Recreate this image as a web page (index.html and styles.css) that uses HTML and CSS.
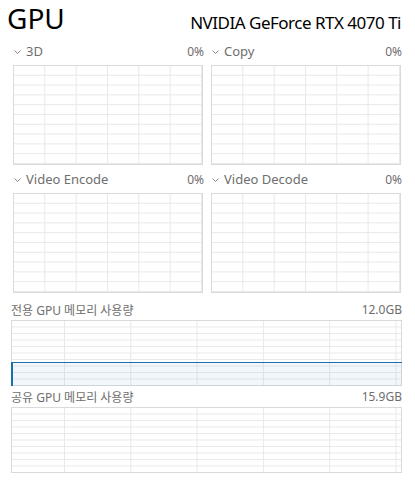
FILE: index.html
```html
<!DOCTYPE html>
<html lang="ko">

<head>
    <meta charset="UTF-8">
    <meta name="viewport" content="width=device-width, initial-scale=1.0">
    <title>GPU</title>
    <link rel="stylesheet" href="styles.css">
</head>

<body>
    <div id="header">
        <h1>GPU</h1>
        <span class="device">NVIDIA GeForce RTX 4070 Ti</span>
    </div>

    <div id="engines">
        <div class="engine">
            <div class="engine-head">
                <span class="name"><svg class="chev" width="7" height="4" viewBox="0 0 7 4"><path d="M0.5 0.5 L3.5 3.5 L6.5 0.5" fill="none" stroke="#8a8a8a" stroke-width="1"/></svg>3D</span>
                <span class="pct">0%</span>
            </div>
            <div class="graph"></div>
        </div>
        <div class="engine">
            <div class="engine-head">
                <span class="name"><svg class="chev" width="7" height="4" viewBox="0 0 7 4"><path d="M0.5 0.5 L3.5 3.5 L6.5 0.5" fill="none" stroke="#8a8a8a" stroke-width="1"/></svg>Copy</span>
                <span class="pct">0%</span>
            </div>
            <div class="graph"></div>
        </div>
        <div class="engine">
            <div class="engine-head">
                <span class="name"><svg class="chev" width="7" height="4" viewBox="0 0 7 4"><path d="M0.5 0.5 L3.5 3.5 L6.5 0.5" fill="none" stroke="#8a8a8a" stroke-width="1"/></svg>Video Encode</span>
                <span class="pct">0%</span>
            </div>
            <div class="graph"></div>
        </div>
        <div class="engine">
            <div class="engine-head">
                <span class="name"><svg class="chev" width="7" height="4" viewBox="0 0 7 4"><path d="M0.5 0.5 L3.5 3.5 L6.5 0.5" fill="none" stroke="#8a8a8a" stroke-width="1"/></svg>Video Decode</span>
                <span class="pct">0%</span>
            </div>
            <div class="graph"></div>
        </div>
    </div>

    <div class="memory first">
        <div class="mem-head">
            <span>전용 GPU 메모리 사용량</span>
            <span>12.0GB</span>
        </div>
        <div class="mem-graph">
            <div class="fill"></div>
        </div>
    </div>

    <div class="memory">
        <div class="mem-head">
            <span>공유 GPU 메모리 사용량</span>
            <span>15.9GB</span>
        </div>
        <div class="mem-graph"></div>
    </div>
</body>

</html>
```

FILE: styles.css
```css
body {
    margin: 0;
    background-color: #ffffff;
    font-family: "Noto Sans", "Noto Sans CJK KR", sans-serif;
    color: #6e6e6e;
    width: 415px;
    height: 482px;
    overflow: hidden;
}

#header {
    display: flex;
    justify-content: space-between;
    align-items: baseline;
    height: 37px;
    padding: 0 14px 0 7px;
}

#header h1 {
    margin: 0;
    font-size: 28px;
    font-weight: 400;
    line-height: 36px;
    color: #000000;
}

.device {
    font-size: 17px;
    color: #000000;
    letter-spacing: -0.5px;
}

#engines {
    display: grid;
    grid-template-columns: 190px 190px;
    column-gap: 8px;
    padding-left: 13px;
}

.engine-head {
    display: flex;
    justify-content: space-between;
    align-items: center;
    height: 28px;
    font-size: 13px;
}

.engine-head .name {
    display: flex;
    align-items: center;
}

.chev {
    margin: 1px 5px 0 1px;
}

.pct {
    font-size: 12px;
    margin-right: -1px;
}

.graph {
    box-sizing: border-box;
    height: 100px;
    border: 1px solid #dadada;
    background-image:
        linear-gradient(to right, #e8e8e8 1px, transparent 1px),
        linear-gradient(to bottom, #e8e8e8 1px, transparent 1px);
    background-size: 31.33px 100%, 100% 9.8px;
    background-position: -1px 0, 0 -1px;
}

.memory {
    padding: 0 13px 0 11px;
}

.memory.first {
    padding-top: 6px;
}

.mem-head {
    display: flex;
    justify-content: space-between;
    align-items: center;
    height: 21px;
    font-size: 12px;
}

.mem-graph {
    position: relative;
    box-sizing: border-box;
    height: 66px;
    border: 1px solid #dadada;
    background-image:
        linear-gradient(to right, #e8e8e8 1px, transparent 1px),
        linear-gradient(to bottom, #e8e8e8 1px, transparent 1px);
    background-size: 66.3px 100%, 100% 6.5px;
    background-position: 52px 0, 0 -1px;
}

.fill {
    position: absolute;
    left: -1px;
    right: -1px;
    bottom: -1px;
    height: 24px;
    box-sizing: border-box;
    border-top: 1px solid #1a70ae;
    border-left: 2px solid #1a70ae;
    background-color: rgba(17, 125, 187, 0.06);
}
```
